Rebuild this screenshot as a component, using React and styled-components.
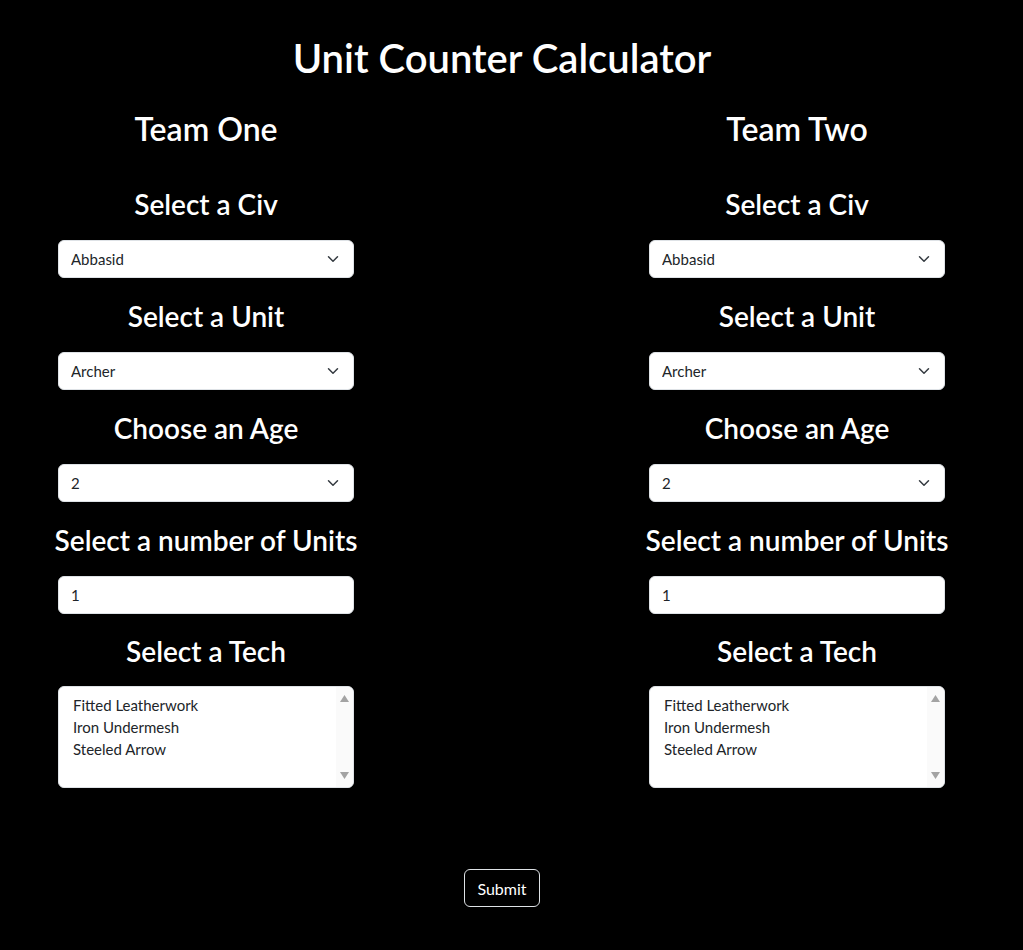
import React from "react";
import styled, { createGlobalStyle } from "styled-components";

const GlobalStyle = createGlobalStyle`
  body {
    margin: 0;
    background: #000;
    color: #fff;
    font-family: "Segoe UI", Lato, "Liberation Sans", sans-serif;
  }
`;

const civs = ["Abbasid", "Chinese", "Delhi Sultanate", "English", "French", "Holy Roman Empire", "Mongols", "Rus"];
const units = ["Archer", "Spearman", "Horseman", "Man-at-Arms", "Knight", "Crossbowman"];
const ages = ["2", "3", "4"];
const techs = ["Fitted Leatherwork", "Iron Undermesh", "Steeled Arrow"];

function Chevron() {
  return (
    <svg width="16" height="12" viewBox="0 0 16 16" fill="none">
      <path d="m2 5 6 6 6-6" stroke="#343a40" strokeWidth="2" strokeLinecap="round" strokeLinejoin="round" />
    </svg>
  );
}

function SelectField({ options, value }) {
  return (
    <SelectWrap>
      <Select defaultValue={value}>
        {options.map((o) => (
          <option key={o} value={o}>{o}</option>
        ))}
      </Select>
      <Arrow><Chevron /></Arrow>
    </SelectWrap>
  );
}

function TechList() {
  return (
    <ListBox>
      <ListItems>
        {techs.map((t) => (
          <ListItem key={t}>{t}</ListItem>
        ))}
      </ListItems>
      <ScrollTrack>
        <svg width="9" height="7" viewBox="0 0 9 7"><path d="M4.5 0 9 7H0z" fill="#a3a3a3" /></svg>
        <svg width="9" height="7" viewBox="0 0 9 7"><path d="M0 0h9L4.5 7z" fill="#a3a3a3" /></svg>
      </ScrollTrack>
    </ListBox>
  );
}

function Team({ name }) {
  return (
    <Column>
      <TeamName>{name}</TeamName>
      <Label>Select a Civ</Label>
      <SelectField options={civs} value="Abbasid" />
      <Label $top={22.4}>Select a Unit</Label>
      <SelectField options={units} value="Archer" />
      <Label $top={22.4}>Choose an Age</Label>
      <SelectField options={ages} value="2" />
      <Label $top={22.4}>Select a number of Units</Label>
      <NumberInput type="number" defaultValue={1} />
      <Label $top={21}>Select a Tech</Label>
      <TechList />
    </Column>
  );
}

export default function App() {
  return (
    <Page>
      <GlobalStyle />
      <Title>Unit Counter Calculator</Title>
      <Teams>
        <Team name="Team One" />
        <Team name="Team Two" />
      </Teams>
      <Footer>
        <SubmitButton type="button">Submit</SubmitButton>
      </Footer>
    </Page>
  );
}

const Page = styled.div`
  width: 1004px;
  padding-top: 34px;
  padding-bottom: 40px;
`;

const Title = styled.h1`
  margin: 0;
  font-size: 40px;
  font-weight: 600;
  line-height: 48px;
  text-align: center;
`;

const Teams = styled.div`
  display: grid;
  grid-template-columns: 340px 340px;
  justify-content: space-between;
  padding: 0 37px 0 36px;
  margin-top: 28px;
`;

const Column = styled.div`
  display: flex;
  flex-direction: column;
  align-items: center;
`;

const TeamName = styled.h2`
  margin: 0 0 40px;
  font-size: 32px;
  font-weight: 600;
  line-height: 38px;
`;

const Label = styled.h3`
  margin: ${(p) => p.$top || 0}px 0 18px;
  font-size: 28px;
  font-weight: 600;
  line-height: 33.6px;
  white-space: nowrap;
`;

const SelectWrap = styled.div`
  position: relative;
  width: 296px;
  height: 38px;
`;

const Select = styled.select`
  appearance: none;
  width: 100%;
  height: 100%;
  box-sizing: border-box;
  padding: 0 36px 0 12px;
  border: 1px solid #dee2e6;
  border-radius: 6px;
  background: #fff;
  color: #212529;
  font-family: inherit;
  font-size: 15px;
  outline: none;
`;

const Arrow = styled.span`
  position: absolute;
  right: 13px;
  top: 13px;
  display: flex;
  pointer-events: none;
`;

const NumberInput = styled.input`
  width: 296px;
  height: 38px;
  box-sizing: border-box;
  padding: 0 12px;
  border: 1px solid #dee2e6;
  border-radius: 6px;
  background: #fff;
  color: #212529;
  font-family: inherit;
  font-size: 15px;
  outline: none;
  appearance: textfield;
  &::-webkit-inner-spin-button,
  &::-webkit-outer-spin-button {
    appearance: none;
    margin: 0;
  }
`;

const ListBox = styled.div`
  display: flex;
  width: 296px;
  height: 102px;
  box-sizing: border-box;
  border: 1px solid #dee2e6;
  border-radius: 6px;
  background: #fff;
  overflow: hidden;
`;

const ListItems = styled.div`
  flex: 1;
  padding: 7px 0 0 14px;
`;

const ListItem = styled.div`
  color: #212529;
  font-size: 15px;
  line-height: 22px;
`;

const ScrollTrack = styled.div`
  width: 17px;
  display: flex;
  flex-direction: column;
  justify-content: space-between;
  align-items: center;
  padding: 8px 0 8px;
  background: #fafafa;
`;

const Footer = styled.div`
  display: flex;
  justify-content: center;
  margin-top: 81px;
`;

const SubmitButton = styled.button`
  height: 38px;
  padding: 0 12px;
  border: 1px solid #dee2e6;
  border-radius: 6px;
  background: transparent;
  color: #fff;
  font-family: inherit;
  font-size: 16px;
  cursor: pointer;
`;
